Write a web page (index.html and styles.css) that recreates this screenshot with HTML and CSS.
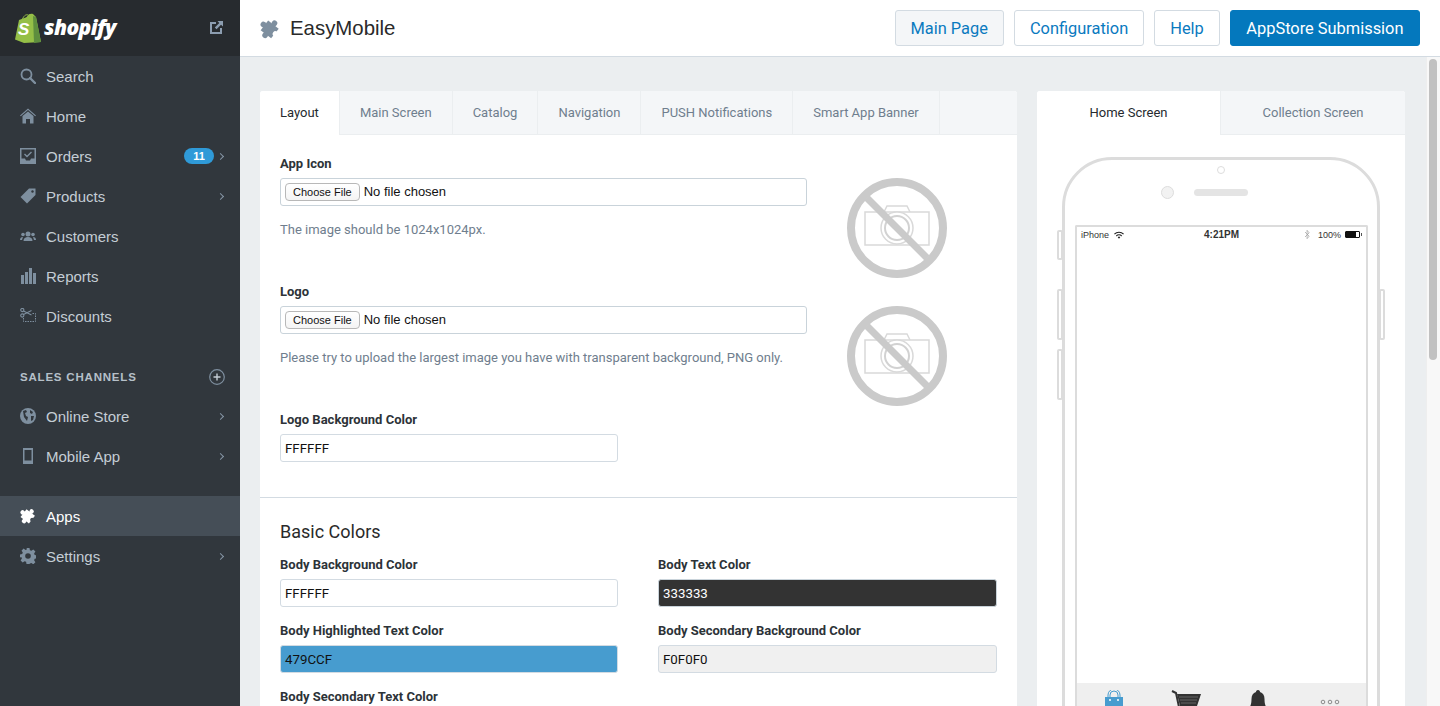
FILE: index.html
```html
<!DOCTYPE html>
<html lang="en">
<head>
<meta charset="utf-8">
<title>EasyMobile</title>
<link rel="stylesheet" href="styles.css">
</head>
<body>
<div class="app">
  <aside class="sidebar">
    <div class="brand">
      <svg class="bag" viewBox="0 0 28 30" width="28" height="30"><path d="M4 7 12 4C13 1 16 0 18 1L21 4 26 29 9 30 0 26.500Z" fill="#95bf47"/><path d="M21 4 26 29 19 30 18 3Z" fill="#5e8e3e"/><path d="M7 8C8 3 11 1 13 2M11 7C12 3 14 1 16 2c1 1 1 3 1 4" fill="none" stroke="#95bf47" stroke-width="1"/></svg>
      <span class="bag-s">S</span>
      <span class="wordmark">shopify</span>
      <svg class="ext" viewBox="0 0 13 13" width="13" height="13"><path d="M6 2H1v10h10V7" fill="none" stroke="#8c9db0" stroke-width="2"/><path d="M7.500 0H13v5.500L11 3.700 6.500 8.200 4.800 6.500 9.300 2z" fill="#8c9db0"/></svg>
    </div>
    <nav class="nav">
      <a class="item"><svg class="ic" viewBox="0 0 16 16"><circle cx="6.500" cy="6.500" r="5" fill="none" stroke="#7e8f9f" stroke-width="1.800"/><path d="M10 10l5 5" stroke="#7e8f9f" stroke-width="2.400" stroke-linecap="round"/></svg><span>Search</span></a>
      <a class="item"><svg class="ic" viewBox="0 0 16 16"><path d="M0 7.500 8 .5l8 7-.8.7L8 2 .8 8.200z" fill="#7e8f9f"/><path d="M2.500 8 8 3.500 13.500 8v7.500H10V11H6v4.500H2.500z" fill="#7e8f9f"/></svg><span>Home</span></a>
      <a class="item"><svg class="ic" viewBox="0 0 16 16"><path d="M0 0h16v16H0zM1.500 1.500v9h3.500l1 2h4l1-2h3.500v-9z" fill="#7e8f9f" fill-rule="evenodd"/><path d="M4.500 6 7 8.500l4.500-4.500" fill="none" stroke="#7e8f9f" stroke-width="1.400"/></svg><span>Orders</span><b class="badge">11</b><i class="chev"></i></a>
      <a class="item"><svg class="ic" viewBox="0 0 16 16"><path d="M9 .5h6.500V7L7 15.500.5 9z" fill="#7e8f9f"/><circle cx="12.500" cy="3.500" r="1.200" fill="#31373d"/></svg><span>Products</span><i class="chev"></i></a>
      <a class="item"><svg class="ic" viewBox="0 0 16 16"><circle cx="8" cy="6" r="2.500" fill="#7e8f9f"/><path d="M3.500 13c0-3 2-4 4.500-4s4.500 1 4.500 4z" fill="#7e8f9f"/><circle cx="3" cy="6.500" r="1.800" fill="#7e8f9f"/><circle cx="13" cy="6.500" r="1.800" fill="#7e8f9f"/><path d="M0 12c0-2 1-3 3-3l-1 3zM16 12c0-2-1-3-3-3l1 3z" fill="#7e8f9f"/></svg><span>Customers</span></a>
      <a class="item"><svg class="ic" viewBox="0 0 16 16"><path d="M1 7h3v9H1zM5 4h3v12H5zM9 0h3v16H9zM13 5h3v11h-3z" fill="#7e8f9f"/></svg><span>Reports</span></a>
      <a class="item"><svg class="ic" viewBox="0 0 16 16"><circle cx="2.300" cy="2" r="1.600" fill="none" stroke="#7e8f9f" stroke-width="1.100"/><circle cx="2.300" cy="7.500" r="1.600" fill="none" stroke="#7e8f9f" stroke-width="1.100"/><path d="M3.500 3l8 4M3.500 6.500l8-4" stroke="#7e8f9f" stroke-width="1.100"/><path d="M3.500 10v3.500h12v-8H12" fill="none" stroke="#7e8f9f" stroke-dasharray="1.500 1"/></svg><span>Discounts</span></a>
      <div class="section"><span>SALES CHANNELS</span><svg viewBox="0 0 16 16" width="16" height="16"><circle cx="8" cy="8" r="7.300" fill="none" stroke="#7e8f9f" stroke-width="1.200"/><path d="M8 4.500v7M4.500 8h7" stroke="#c4cdd5" stroke-width="1.400"/></svg></div>
      <a class="item"><svg class="ic" viewBox="0 0 16 16"><circle cx="8" cy="8" r="8" fill="#7e8f9f"/><path d="M3 3l3-1 1 2-2 1 1 3 2 1-1 4-3-4zM10 2l3 2-1 2-2-1zM11 8h3l-1 4-2 1z" fill="#31373d"/></svg><span>Online Store</span><i class="chev"></i></a>
      <a class="item"><svg class="ic" viewBox="0 0 16 16"><path d="M3 0h10v16H3zM4.500 2v10.500h7V2z" fill="#7e8f9f" fill-rule="evenodd"/></svg><span>Mobile App</span><i class="chev"></i></a>
      <a class="item active"><svg class="ic" viewBox="1 1 18 18"><g transform="rotate(38 10 10)" fill="#fff"><rect x="4" y="5" width="12" height="11"/><circle cx="10" cy="3.400" r="2.500"/><circle cx="2.800" cy="10.500" r="2.500"/><circle cx="16.500" cy="10.500" r="2.400" fill="#454e57"/><circle cx="10" cy="17.200" r="2.500"/></g></svg><span>Apps</span></a>
      <a class="item"><svg class="ic" viewBox="0 0 16 16"><path d="M6.500 0h3l.4 2.200 1.500.6L13.300 1.500l2.100 2.100-1.300 1.900.6 1.500 2.200.4v3l-2.200.4-.6 1.500 1.300 1.900-2.100 2.100-1.900-1.300-1.500.6L9.500 16h-3l-.4-2.200-1.500-.6-1.900 1.300-2.100-2.100 1.300-1.900-.6-1.500L0 9.500v-3l2.200-.4.6-1.500-1.300-1.900 2.100-2.100 1.900 1.300 1.500-.6z" fill="#7e8f9f"/><circle cx="8" cy="8" r="2.800" fill="#31373d"/></svg><span>Settings</span><i class="chev"></i></a>
    </nav>
  </aside>
  <div class="main">
    <header class="topbar">
      <svg class="title-ic" viewBox="1 1 18 18" width="20" height="20"><g transform="rotate(38 10 10)" fill="#7e8f9f"><rect x="4" y="5" width="12" height="11"/><circle cx="10" cy="3.400" r="2.500"/><circle cx="2.800" cy="10.500" r="2.500"/><circle cx="16.500" cy="10.500" r="2.400" fill="#fff"/><circle cx="10" cy="17.200" r="2.500"/></g></svg>
      <h1 class="title">EasyMobile</h1>
      <div class="actions">
        <a class="btn btn-on">Main Page</a>
        <a class="btn">Configuration</a>
        <a class="btn">Help</a>
        <a class="btn btn-primary">AppStore Submission</a>
      </div>
    </header>
    <div class="viewport">
      <div class="content">
        <section class="card form-card">
          <div class="tabs">
            <a class="tab tab-on">Layout</a>
            <a class="tab">Main Screen</a>
            <a class="tab">Catalog</a>
            <a class="tab">Navigation</a>
            <a class="tab">PUSH Notifications</a>
            <a class="tab">Smart App Banner</a>
          </div>
          <div class="upload-block">
            <div class="upload-row">
              <div class="upload-fields">
                <label class="label">App Icon</label>
                <div class="file"><span class="file-btn">Choose File</span><span class="file-text">No file chosen</span></div>
                <p class="help">The image should be 1024x1024px.</p>
              </div>
              <svg class="noimg" viewBox="0 0 100 100" width="100" height="100"><rect x="18" y="34" width="64" height="33" fill="none" stroke="#d9d9d9" stroke-width="1.500"/><path d="M37 34l3-6h20l3 6" fill="none" stroke="#d9d9d9" stroke-width="1.500"/><circle cx="50" cy="50" r="16" fill="#fff" stroke="#d9d9d9" stroke-width="1.500"/><circle cx="50" cy="50" r="12" fill="none" stroke="#d2d2d2" stroke-width="2"/><path d="M20 20 80 80" stroke="#cacaca" stroke-width="7"/><circle cx="50" cy="50" r="46" fill="none" stroke="#cacaca" stroke-width="8"/></svg>
            </div>
            <div class="upload-row">
              <div class="upload-fields">
                <label class="label">Logo</label>
                <div class="file"><span class="file-btn">Choose File</span><span class="file-text">No file chosen</span></div>
                <p class="help">Please try to upload the largest image you have with transparent background, PNG only.</p>
              </div>
              <svg class="noimg" viewBox="0 0 100 100" width="100" height="100"><rect x="18" y="34" width="64" height="33" fill="none" stroke="#d9d9d9" stroke-width="1.500"/><path d="M37 34l3-6h20l3 6" fill="none" stroke="#d9d9d9" stroke-width="1.500"/><circle cx="50" cy="50" r="16" fill="#fff" stroke="#d9d9d9" stroke-width="1.500"/><circle cx="50" cy="50" r="12" fill="none" stroke="#d2d2d2" stroke-width="2"/><path d="M20 20 80 80" stroke="#cacaca" stroke-width="7"/><circle cx="50" cy="50" r="46" fill="none" stroke="#cacaca" stroke-width="8"/></svg>
            </div>
            <div class="field half-field">
              <label class="label">Logo Background Color</label>
              <div class="color">FFFFFF</div>
            </div>
          </div>
          <div class="colors-block">
            <h2 class="heading">Basic Colors</h2>
            <div class="grid">
              <div class="field"><label class="label">Body Background Color</label><div class="color">FFFFFF</div></div>
              <div class="field"><label class="label">Body Text Color</label><div class="color color-dark">333333</div></div>
              <div class="field"><label class="label">Body Highlighted Text Color</label><div class="color color-blue">479CCF</div></div>
              <div class="field"><label class="label">Body Secondary Background Color</label><div class="color color-grey">F0F0F0</div></div>
              <div class="field"><label class="label">Body Secondary Text Color</label></div>
            </div>
          </div>
        </section>
        <section class="card preview-card">
          <div class="tabs ptabs">
            <a class="tab tab-on ptab-a">Home Screen</a>
            <a class="tab ptab-b">Collection Screen</a>
          </div>
          <div class="phone-wrap">
            <div class="phone">
              <div class="side side-l1"></div>
              <div class="side side-l2"></div>
              <div class="side side-l3"></div>
              <div class="side side-r"></div>
              <div class="phone-top">
                <div class="cam-dot"></div>
                <div class="cam-row"><div class="cam"></div><div class="speaker"></div></div>
              </div>
              <div class="screen">
                <div class="status">
                  <span class="st-l">iPhone <svg viewBox="0 0 12 9" width="10" height="8"><path d="M0 3a8.500 8.500 0 0 1 12 0l-1 1a7 7 0 0 0-10 0zM2.300 5.200a5 5 0 0 1 7.400 0l-1 1a3.500 3.500 0 0 0-5.400 0zM4.500 7.200a2 2 0 0 1 3 0L6 9z" fill="#222"/></svg></span>
                  <span class="st-c">4:21PM</span>
                  <span class="st-r"><svg viewBox="0 0 6 12" width="5" height="11"><path d="M0 3l5 5-2.500 3V1L5 4 0 9" fill="none" stroke="#999" stroke-width=".8"/></svg><span class="pct">100%</span><span class="batt"></span></span>
                </div>
                <div class="screen-body"></div>
                <div class="phone-tabbar">
                  <svg viewBox="0 0 20 24" width="20" height="24"><path d="M6 8V5a4 4 0 0 1 8 0v3M4 8V5a6 6 0 0 1 12 0v3" fill="none" stroke="#479ccf"/><path d="M1 7h18v17H1z" fill="#479ccf"/><circle cx="6" cy="10" r="1" fill="#fff"/><circle cx="14" cy="10" r="1" fill="#fff"/></svg>
                  <svg viewBox="0 0 30 24" width="30" height="24"><path d="M1 1l4 2 3 14h17" fill="none" stroke="#333" stroke-width="2"/><path d="M6 4h24l-4 12H9z" fill="#333"/><path d="M8 7h19M9 10h17M10 13h15" stroke="#888" stroke-width=".6"/></svg>
                  <svg viewBox="0 0 20 24" width="20" height="24"><path d="M10 0c1.500 0 2 1 2 2 3 1 4.500 3.500 4.500 7 0 5 1 8 3.500 10H0c2.500-2 3.500-5 3.500-10 0-3.500 1.500-6 4.500-7 0-1 .5-2 2-2z" fill="#333"/></svg>
                  <svg viewBox="0 0 20 6" width="20" height="6"><circle cx="3" cy="3" r="1.800" fill="none" stroke="#8a8a8a"/><circle cx="10" cy="3" r="1.800" fill="none" stroke="#8a8a8a"/><circle cx="17" cy="3" r="1.800" fill="none" stroke="#8a8a8a"/></svg>
                </div>
              </div>
            </div>
          </div>
        </section>
      </div>
      <div class="scrollbar"><div class="thumb"></div></div>
    </div>
  </div>
</div>
</body>
</html>
```

FILE: styles.css
```css
* { box-sizing: border-box; }
html, body { margin: 0; height: 100%; overflow: hidden; }
body { font-family: "Liberation Sans", Arial, sans-serif; background: #ebeef0; }
.app { display: flex; height: 706px; overflow: hidden; }

.sidebar { width: 240px; flex: none; background: #31373d; color: #c4cdd5; }
.brand { position: relative; height: 56px; background: #272b2f; display: flex; align-items: center; padding: 0 16px 0 15px; }
.bag { flex: none; margin-top: -1px; }
.bag-s { position: absolute; left: 18px; top: 20px; font: italic bold 17px "Liberation Sans", sans-serif; color: #fff; }
.wordmark { margin-left: 1px; font: italic 800 21px "Open Sans", sans-serif; letter-spacing: -0.6px; color: #fff; margin-top: -3px; }
.ext { margin-left: auto; margin-top: -1px; margin-right: 1px; }
.nav { display: flex; flex-direction: column; }
.item { height: 40px; display: flex; align-items: center; padding: 0 16px 0 20px; font-size: 15px; color: #c4cdd5; }
.item > span { padding-top: 1px; }
.ic { width: 16px; height: 16px; flex: none; margin-right: 10px; }
.item.active { background: #454e57; color: #fff; margin-top: 20px; }
.badge { margin-left: auto; width: 30px; height: 16px; border-radius: 8px; background: #2f9ad8; color: #fff; font-size: 11px; font-weight: 700; line-height: 16px; text-align: center; }
.chev { width: 5px; height: 5px; border-top: 1.500px solid #8596a6; border-right: 1.500px solid #8596a6; transform: rotate(45deg); margin-left: 4px; margin-right: 1px; }
.item > span + .chev { margin-left: auto; }
.section { height: 40px; margin-top: 20px; display: flex; align-items: center; justify-content: space-between; padding: 0 15px 0 20px; font-size: 11.500px; font-weight: 700; letter-spacing: 0.8px; color: #b6c0c9; }
.section > span { padding-top: 1px; }
.section > svg { margin-top: 1px; }

.main { flex: 1; min-width: 0; display: flex; flex-direction: column; }
.topbar { height: 57px; flex: none; background: #fff; border-bottom: 1px solid #d3dbe2; display: flex; align-items: center; padding: 0 20px; }
.title-ic { margin-right: 10px; margin-top: 2px; }
.title { margin: 0; font-size: 20.400px; font-weight: 400; color: #2a2a2a; }
.actions { margin-left: auto; display: flex; gap: 10px; }
.btn { height: 36px; padding: 0 15px; border: 1px solid #d3dbe2; border-radius: 3px; background: #fff; color: #0a7abf; font: 16.400px/36px Roboto, sans-serif; }
.btn-on { background: #f4f6f8; }
.btn-primary { background: #0478bd; border-color: #0478bd; color: #fff; padding: 0 15.500px; }

.viewport { flex: 1; min-height: 0; display: flex; }
.content { flex: 1; min-width: 0; display: flex; align-items: flex-start; gap: 20px; padding: 34px 20px 0; overflow: hidden; }
.card { background: #fff; border-radius: 3px 3px 0 0; }
.form-card { width: 757px; flex: none; height: 640px; }
.preview-card { width: 368px; flex: none; height: 640px; }
.tabs { display: flex; height: 44px; background: #f4f6f8; border-bottom: 1px solid #ebeef0; border-radius: 3px 3px 0 0; }
.tab { padding: 0 20px; font: 13px/44px Roboto, sans-serif; color: #6f7e8e; border-right: 1px solid #ebeef0; }
.tab-on { background: #fff; color: #262a2e; margin-bottom: -1px; height: 44px; border-radius: 3px 0 0 0; }
.ptab-a { width: 184px; padding: 0; text-align: center; }
.ptab-b { width: 184px; padding: 0; text-align: center; border-right: 0; }

.upload-block { padding: 20px 20px 24px; border-bottom: 1px solid #d3dbe2; height: 363px; }
.upload-row { display: flex; height: 128px; }
.upload-fields { width: 527px; flex: none; }
.noimg { flex: none; margin: 23px 0 0 40px; }
.label { display: block; font: 700 13px/18px Roboto, sans-serif; color: #2d3338; margin-bottom: 5px; }
.file { height: 28px; border: 1px solid #c9d3da; border-radius: 3px; display: flex; align-items: center; padding-left: 4px; background: #fff; }
.file-btn { height: 18px; padding: 0 7px; border: 1px solid #b8b8b8; border-radius: 4px; font: 11px/16px "Liberation Sans", sans-serif; color: #111; background: linear-gradient(#fff, #f4f4f4); }
.file-text { margin-left: 4px; margin-top: -2px; font: 13px "Liberation Sans", sans-serif; color: #111; }
.help { margin: 16px 0 0; font: 13px/16px Roboto, sans-serif; color: #6f7e8e; }
.half-field { width: 338px; }
.color { height: 28px; border: 1px solid #d3dbe2; border-radius: 3px; padding-left: 4px; font: 13.300px/27px Roboto, sans-serif; color: #111; background: #fff; }
.color-dark { background: #333; color: #fff; border-color: #c9d3da; }
.color-blue { background: #479ccf; color: #111; }
.color-grey { background: #f0f0f0; }
.colors-block { padding: 22px 20px 0; }
.heading { margin: 0 0 12px; font: 400 18px/24px Roboto, sans-serif; color: #2a2a2a; }
.grid { display: grid; grid-template-columns: 338px 339px; column-gap: 40px; row-gap: 15px; }

.phone-wrap { padding: 22px 25px 0; }
.phone { position: relative; width: 318px; height: 600px; border: 3px solid #dcdcdc; border-radius: 50px 50px 0 0; background: #fff; }
.side { position: absolute; width: 6px; background: #fff; border: 2px solid #dcdcdc; border-radius: 2px; }
.side-l1 { left: -8px; top: 70px; height: 30px; }
.side-l2 { left: -8px; top: 129px; height: 51px; }
.side-l3 { left: -8px; top: 189px; height: 51px; }
.side-r { right: -8px; top: 129px; height: 51px; }
.phone-top { height: 65px; display: flex; flex-direction: column; align-items: center; }
.cam-dot { width: 8px; height: 8px; border-radius: 50%; border: 1.500px solid #ddd; margin-top: 6px; }
.cam-row { display: flex; align-items: center; gap: 20px; margin-top: 12px; margin-right: 34px; }
.cam { width: 13px; height: 13px; border-radius: 50%; background: #f2f2f2; border: 1.500px solid #ddd; }
.speaker { width: 54px; height: 7px; border-radius: 4px; background: #e4e4e4; }
.screen { margin: 0 9px 0 10px; height: 533px; border: 2px solid #dcdcdc; border-bottom: 0; border-radius: 2px 2px 0 0; display: flex; flex-direction: column; }
.status { height: 15px; flex: none; display: flex; align-items: center; justify-content: space-between; padding: 0 4px 0 4px; font-size: 9px; color: #333; }
.st-l, .st-r { display: flex; align-items: center; gap: 4px; }
.st-l { gap: 5px; }
.st-c { font-weight: 700; font-size: 10px; margin-left: 14px; }
.pct { margin-left: 4px; }
.batt { position: relative; width: 15px; height: 7px; background: linear-gradient(90deg, #111 80%, #fff 80%); border: 1px solid #111; border-radius: 1px; margin-right: 2px; }
.batt::after { content: ""; position: absolute; right: -3px; top: 1px; width: 1px; height: 3px; background: #555; }
.screen-body { flex: 1; }
.phone-tabbar { height: 75px; flex: none; background: #efefef; display: grid; grid-template-columns: repeat(4, 72px); justify-content: center; justify-items: center; align-items: start; padding: 7px 0 0; }
.phone-tabbar svg:last-child { margin-top: 9px; }

.scrollbar { width: 14px; flex: none; background: #f8f8f8; border-left: 1px solid #eeeeee; padding: 2px 2px; }
.thumb { width: 8px; height: 301px; background: #c1c1c1; border-radius: 4px; }
```
